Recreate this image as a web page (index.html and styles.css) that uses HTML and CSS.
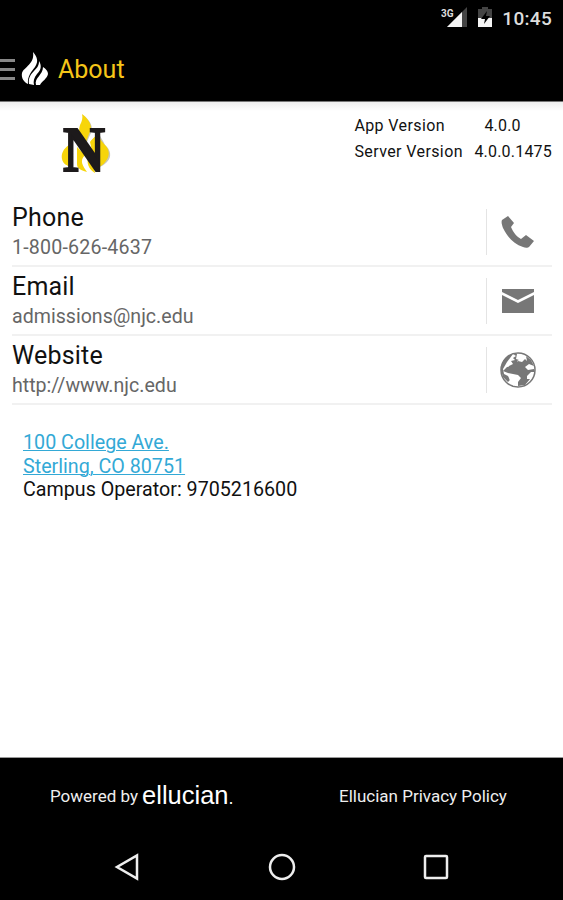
FILE: index.html
```html
<!DOCTYPE html>
<html lang="en">
<head>
    <meta charset="UTF-8">
    <meta name="viewport" content="width=device-width, initial-scale=1.0">
    <title>About</title>
    <link rel="stylesheet" href="styles.css">
</head>
<body>
    <div class="status-bar">
        <svg class="signal" width="27" height="22" viewBox="0 0 27 22">
            <path d="M26 0V20H6z" fill="#444"/>
            <path d="M21 5V20H6z" fill="#f4f4f4"/>
            <text x="0" y="10" class="network">3G</text>
        </svg>
        <svg class="battery" width="15" height="20" viewBox="0 0 15 20">
            <path d="M4 0h6v2h4v9H0V2h4z" fill="#444"/>
            <path d="M0 11h14v9H0z" fill="#f4f4f4"/>
            <path d="M9 4L3 12h4l-1 5 6-8H8z" fill="#000"/>
        </svg>
        <span class="clock">10:45</span>
    </div>
    <header class="action-bar">
        <div class="menu"><span></span><span></span><span></span></div>
        <svg class="flame" width="28" height="34" viewBox="0 0 28 34">
            <path d="M12 0C16 5 18 9 14 15C11 19 6 24 7 32C3 30 0 26 1 21C3 15 14 12 12 0z" fill="#fff"/>
            <path d="M18 9C21 14 20 18 16 22C13 26 12 29 13 33L8 32C7 26 10 22 13 19C17 15 18 13 18 9z" fill="#fff"/>
            <path d="M22 15C25 17 27 19 27 22C26 27 21 29 19 33H15C13 26 22 23 22 15z" fill="#fff"/>
        </svg>
        <h1>About</h1>
    </header>
    <main>
        <section class="intro">
            <svg class="logo" width="52" height="66" viewBox="0 0 52 66">
                <path d="M22 2C31 9 33 16 29 22L25 31L15 29C21 22 20 17 20 12C22 8 23 6 22 2z M37 18C39 24 42 27 44 32C50 37 51 44 46 49C43 52 40 54 36 55L30 28C33 24 37 23 37 18z M8 33C3 37 1 41 2 46C3 51 6 53 11 54z" fill="#c9c7bb"/>
                <path d="M21 1C30 8 32 15 28 21L24 32L14 29C20 21 17 18 19 12C21 8 22 5 21 1z M36 18C37 24 40 27 43 31C49 36 49 43 45 48C42 52 39 54 35 55L29 29C32 25 36 23 36 18z M8 32C2 36 0 41 1 46C2 51 6 53 11 54z" fill="#f7d50a"/>
                <path d="M16 34L24 42C18 48 22 53 26 59C19 57 16 55 16 51z M27 45L33 54L34 60C30 58 25 52 27 45z" fill="#f7d50a"/>
                <text x="2" y="58" class="logo-letter" textLength="42" lengthAdjust="spacingAndGlyphs">N</text>
            </svg>
            <dl class="versions">
                <dt>App Version</dt><dd class="app">4.0.0</dd>
                <dt>Server Version</dt><dd>4.0.0.1475</dd>
            </dl>
        </section>
        <ul class="contacts">
            <li>
                <div class="info"><h2>Phone</h2><p class="phone">1-800-626-4637</p></div>
                <div class="action">
                    <svg width="36" height="36" viewBox="0 0 36 36">
                        <path d="M8 2L2 6C1 8 2 11 3 14C8 24 14 30 23 33C25 34 28 34 29 33L34 27L26 21L21 25C17 23 13 18 11 13L14 9z" fill="#777"/>
                    </svg>
                </div>
            </li>
            <li>
                <div class="info"><h2>Email</h2><p>admissions@njc.edu</p></div>
                <div class="action">
                    <svg width="36" height="36" viewBox="0 0 36 36">
                        <path d="M2 6H34V9L18 17L2 9z" fill="#777"/>
                        <path d="M2 12L18 20L34 12V30H2z" fill="#777"/>
                    </svg>
                </div>
            </li>
            <li>
                <div class="info"><h2>Website</h2><p>http://www.njc.edu</p></div>
                <div class="action">
                    <svg width="36" height="36" viewBox="0 0 36 36">
                        <circle cx="18" cy="18" r="17" fill="#fff" stroke="#777" stroke-width="1.5"/>
                        <path d="M13 2L16 4L13 6L15 8L11 9L13 12L9 14L8 17L12 19L18 21L20 17L25 14L22 12L18 12L17 9L19 8L16 7L17 2C8 1 1 8 1 18L3 25L8 30L10 28L8 24L4 22L3 17L7 10z" fill="#777"/>
                        <path d="M12 14L18 9L22 10L25 7L27 9L26 4L31 8L34 14L29 12L25 15L28 18L34 17L35 20L31 20L27 24L27 27L30 27L25 33L18 34L18 30L21 26L18 23L8 21L3 19L7 15z" fill="#777"/>
                        <path d="M9 23L16 24L19 27L16 30L14 34L10 30z M9 10L12 10L9 13L7 13z" fill="#fff"/>
                    </svg>
                </div>
            </li>
        </ul>
        <address>
            <a href="#">100 College Ave.</a><br>
            <a href="#">Sterling, CO 80751</a><br>
            <span>Campus Operator: 9705216600</span>
        </address>
    </main>
    <footer>
        <div class="powered">Powered by <span class="brand">ellucian<small>.</small></span></div>
        <div class="policy">Ellucian Privacy Policy</div>
    </footer>
    <nav>
        <svg width="26" height="28" viewBox="0 0 26 28"><path d="M23 2.5V25.5L3 14z"/></svg>
        <svg width="28" height="28" viewBox="0 0 28 28"><circle cx="14" cy="14" r="12"/></svg>
        <svg width="26" height="28" viewBox="0 0 26 28"><rect x="2" y="3" width="22" height="22" rx="1"/></svg>
    </nav>
</body>
</html>
```
FILE: styles.css
```css
* {
    box-sizing: border-box;
}
body {
    margin: 0;
    height: 900px;
    display: flex;
    flex-direction: column;
    background: #fff;
    color: #111;
    font-family: Roboto, sans-serif;
    overflow: hidden;
}
h1, h2, p, ul, dl, dd {
    margin: 0;
    padding: 0;
    font-weight: normal;
}
.status-bar {
    height: 38px;
    background: #000;
    display: flex;
    align-items: flex-start;
    justify-content: flex-end;
    padding: 7px 11px 0 0;
}
.signal {
    margin-right: 10px;
}
.network {
    font: bold 10px Roboto, sans-serif;
    fill: #ddd;
    stroke: #000;
    stroke-width: 2px;
    paint-order: stroke;
}
.battery {
    margin-right: 9px;
}
.clock {
    color: #ddd;
    font-size: 19px;
    font-weight: 500;
    line-height: 24px;
    letter-spacing: 0.3px;
}
.action-bar {
    height: 63px;
    background: #000;
    display: flex;
    align-items: center;
}
.menu {
    width: 15px;
    display: flex;
    flex-direction: column;
    gap: 6px;
    padding-bottom: 1px;
}
.menu span {
    height: 3px;
    background: #888;
}
.flame {
    margin: 0 9px 2px 6px;
}
h1 {
    color: #f5c518;
    font-size: 25px;
    line-height: 30px;
}
main {
    flex: 1;
    border-top: 1px solid #777;
    border-bottom: 1px solid #999;
    background: linear-gradient(#eee, #fff 9px);
}
.intro {
    height: 96px;
    display: flex;
    justify-content: space-between;
    padding: 11px 11px 0 61px;
}
.logo {
    overflow: visible;
}
.logo-letter {
    font: bold 63px "Liberation Serif", serif;
    fill: #1d1a1b;
    stroke: #1d1a1b;
    stroke-width: 2px;
}
.versions {
    display: grid;
    grid-template-columns: 120px auto;
    grid-auto-rows: 26px;
    font-size: 16px;
    line-height: 26px;
    letter-spacing: 0.4px;
}
.versions dd {
    letter-spacing: 0.2px;
}
.versions .app {
    padding-left: 10px;
}
.contacts {
    list-style: none;
    padding: 0 11px 0 12px;
}
.contacts li {
    height: 69px;
    display: flex;
    align-items: center;
    border-bottom: 2px solid #f1f1f1;
}
.info {
    flex: 1;
}
h2 {
    font-size: 25px;
    line-height: 32px;
    letter-spacing: 0.2px;
}
.info p {
    color: #666;
    font-size: 19.6px;
    line-height: 28px;
}
.info .phone {
    letter-spacing: 0.2px;
}
.action {
    width: 66px;
    height: 46px;
    border-left: 1px solid #e4e4e4;
    display: flex;
    align-items: center;
    padding-left: 13px;
}
address {
    margin: 26px 0 0 23px;
    font-style: normal;
    font-size: 19.7px;
    line-height: 23.5px;
}
address a {
    color: #33a9d6;
    text-decoration-thickness: 1px;
}
footer {
    height: 77px;
    background: #000;
    color: #eee;
    display: flex;
    align-items: center;
    font-size: 17px;
    padding-bottom: 2px;
}
.powered {
    width: 339px;
    padding-left: 50px;
    display: flex;
    align-items: center;
    gap: 4px;
    white-space: nowrap;
}
.brand {
    font-family: "Liberation Sans", sans-serif;
    font-size: 25.5px;
    line-height: 30px;
    padding-top: 2px;
    color: #fff;
}
.brand small {
    font-size: 18px;
}
nav {
    height: 65px;
    background: #000;
    display: flex;
    justify-content: space-between;
    padding: 18px 114px 0;
}
nav svg {
    fill: none;
    stroke: #eee;
    stroke-width: 2.5px;
}
```
